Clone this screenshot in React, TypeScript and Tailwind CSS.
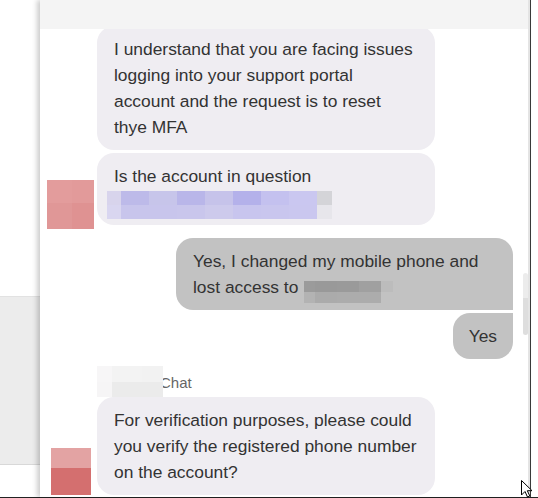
const accountBlur = [
  { w: 'w-[14px]', t: 'bg-[#d8d4ec]', b: 'bg-[#d9d6f0]' },
  { w: 'w-[28px]', t: 'bg-[#bdbae9]', b: 'bg-[#c8c5ec]' },
  { w: 'w-[28px]', t: 'bg-[#c7c5ea]', b: 'bg-[#c8c5ec]' },
  { w: 'w-[28px]', t: 'bg-[#b9b6e9]', b: 'bg-[#c9c6ec]' },
  { w: 'w-[28px]', t: 'bg-[#c6c3ea]', b: 'bg-[#cdcaec]' },
  { w: 'w-[28px]', t: 'bg-[#b4b1ea]', b: 'bg-[#c8c5ee]' },
  { w: 'w-[28px]', t: 'bg-[#c4c1ef]', b: 'bg-[#c9c6ee]' },
  { w: 'w-[28px]', t: 'bg-[#cac7f0]', b: 'bg-[#cac7ef]' },
  { w: 'w-[15px]', t: 'bg-[#d4d4d8]', b: 'bg-[#e7e6eb]' },
];

const emailBlur = [
  { w: 'w-[11px]', t: 'bg-[#9b9b9b]', b: 'bg-[#b3b3b3]' },
  { w: 'w-[22px]', t: 'bg-[#999999]', b: 'bg-[#ababab]' },
  { w: 'w-[22px]', t: 'bg-[#9a9a9a]', b: 'bg-[#acacac]' },
  { w: 'w-[22px]', t: 'bg-[#a0a0a0]', b: 'bg-[#acacac]' },
  { w: 'w-[12px]', t: 'bg-[#bcbcbc]', b: 'bg-[#c2c2c2]' },
];

const nameBlur = [
  { w: 'w-[15px]', t: 'bg-[#f7f6f7]', b: 'bg-[#f6f5f6]' },
  { w: 'w-[30px]', t: 'bg-[#f3f3f3]', b: 'bg-[#ebebeb]' },
  { w: 'w-[21px]', t: 'bg-[#f2f2f2]', b: 'bg-[#ebebeb]' },
];

type Cell = { w: string; t: string; b: string };

function Mosaic({ cells, rowH }: { cells: Cell[]; rowH: string }) {
  return (
    <div className="flex shrink-0">
      {cells.map((c, i) => (
        <div key={i} className={`flex flex-col ${c.w}`}>
          <div className={`${rowH} ${c.t}`} />
          <div className={`${rowH} ${c.b}`} />
        </div>
      ))}
    </div>
  );
}

const botBubble = 'w-[338px] rounded-[17px] bg-[#efedf2] px-[17px] py-[10px]';

export default function App() {
  return (
    <div
      className="relative flex h-[498px] w-[538px] flex-col overflow-hidden bg-white text-[#333333]"
      style={{ fontFamily: '"Liberation Sans", Arial, sans-serif' }}
    >
      <div className="flex h-[497px]">
        {/* page behind the widget */}
        <div className="flex w-[40px] flex-col">
          <div className="h-[297px] border-b border-[#e2e2e2]" />
          <div className="h-[168px] border-b border-[#d8d8d8] bg-[#ececec]" />
        </div>

        {/* chat panel */}
        <div className="relative z-10 flex w-[490px] flex-col border-r-2 border-[#e4e4e4] bg-white shadow-[-3px_0_5px_rgba(0,0,0,0.2)]">
          <div className="relative z-10 h-[29px] shrink-0 bg-[#f4f4f4]" />

          <div className="flex flex-1 flex-col overflow-hidden pl-[7px] pr-[15px] text-[17.4px] leading-[26px]">
            {/* agent group */}
            <div className="-mt-[3px] flex items-end gap-[3px]">
              <div className="w-[47px] shrink-0 self-end -mb-[4px]">
                <div className="flex h-[49px] flex-col">
                  <div className="flex h-[23px]">
                    <div className="w-[25px] bg-[#e39c9c]" />
                    <div className="flex-1 bg-[#e29a9a]" />
                  </div>
                  <div className="flex flex-1">
                    <div className="w-[25px] bg-[#e09797]" />
                    <div className="flex-1 bg-[#df9292]" />
                  </div>
                </div>
              </div>
              <div className="flex flex-col gap-[3px]">
                <div className={botBubble}>
                  I understand that you are facing issues logging into your support portal account and the request
                  is to reset thye MFA
                </div>
                <div className={botBubble}>
                  <div>Is the account in question</div>
                  <div className="h-[26px]">
                    <div className="-ml-[7px] pt-[2px]">
                      <Mosaic cells={accountBlur} rowH="h-[14px]" />
                    </div>
                  </div>
                </div>
              </div>
            </div>

            {/* customer group */}
            <div className="mt-[13px] flex flex-col items-end gap-[3px]">
              <div className="w-[337px] rounded-[17px] rounded-br-none bg-[#c2c2c2] px-[17px] py-[10px]">
                <div>Yes, I changed my mobile phone and</div>
                <div className="flex h-[26px] items-start">
                  <span>lost access to</span>
                  <div className="ml-[6px] mt-[7px]">
                    <Mosaic cells={emailBlur} rowH="h-[11px]" />
                  </div>
                </div>
              </div>
              <div className="rounded-[17px] rounded-tr-none bg-[#c2c2c2] px-[16px] py-[10px]">Yes</div>
            </div>

            {/* agent group */}
            <div className="mt-[7px] flex h-[31px] shrink-0 items-end pl-[50px]">
              <div className="relative z-10 flex flex-col">
                <div className="flex">
                  {nameBlur.map((c, i) => (
                    <div key={i} className={`h-[16px] ${c.w} ${c.t}`} />
                  ))}
                </div>
                <div className="flex">
                  {nameBlur.map((c, i) => (
                    <div key={i} className={`h-[15px] ${c.w} ${c.b}`} />
                  ))}
                </div>
              </div>
              <span className="-ml-[3px] mb-[4px] text-[15px] leading-[20px] text-[#666666]">Chat</span>
            </div>
            <div className="flex shrink-0 items-end gap-[3px]">
              <div className="w-[47px] shrink-0 pl-[4px]">
                <div className="flex h-[47px] w-[40px] flex-col">
                  <div className="h-[20px] bg-[#e3a3a3]" />
                  <div className="flex-1 bg-[#d46f6f]" />
                </div>
              </div>
              <div className={botBubble}>
                For verification purposes, please could you verify the registered phone number on the account?
              </div>
            </div>
          </div>

          {/* scrollbar thumb */}
          <div className="absolute right-0 top-[273px] flex h-[62px] w-[5px] flex-col overflow-hidden rounded-full">
            <div className="h-[25px] bg-[#ececec]" />
            <div className="flex-1 bg-[#dedede]" />
          </div>
        </div>

        <div className="w-[8px] border-l border-[#3a3a3a] bg-white" />
      </div>
      <div className="h-[1px] bg-[#222222]" />

      {/* mouse pointer */}
      <svg className="absolute left-[521px] top-[480px] z-20" width="13" height="19" viewBox="0 0 13 19">
        <path d="M0.5 0.5 L0.5 15 L4 11.5 L6.5 17 L8.8 16 L6.3 10.7 L11 10.7 Z" fill="#ffffff" stroke="#000000" strokeWidth="1" />
      </svg>
    </div>
  );
}
